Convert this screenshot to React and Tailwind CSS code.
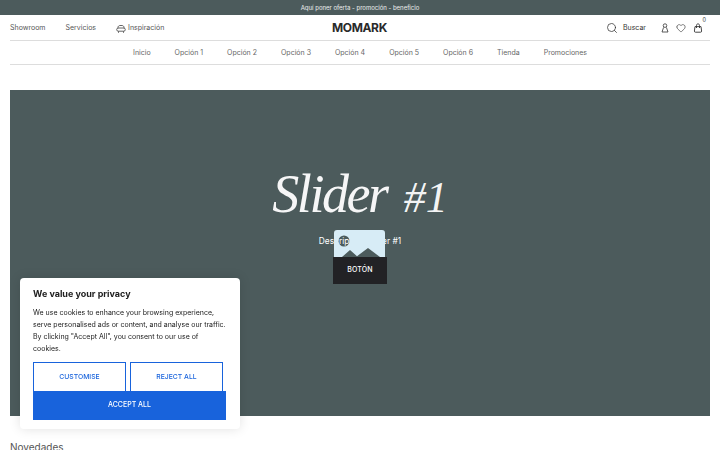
import React from 'react';
import { Search, Heart } from 'lucide-react';

const MENU = ['Inicio', 'Opción 1', 'Opción 2', 'Opción 3', 'Opción 4', 'Opción 5', 'Opción 6', 'Tienda', 'Promociones'];

const IconSofa = () => (
  <svg viewBox="0 0 10 10" className="w-[10px] h-[10px]" fill="none" stroke="currentColor" strokeWidth="0.9">
    <path d="M2 4.5V3.5C2 2.2 3 1.5 4 1.5H6C7 1.5 8 2.2 8 3.5V4.5" />
    <rect x="0.7" y="4" width="8.6" height="3.2" rx="1.6" />
    <path d="M2.5 7.2V8.8M7.5 7.2V8.8" />
  </svg>
);

const IconUser = () => (
  <svg viewBox="0 0 10 10" className="w-[10px] h-[10px]" fill="none" stroke="currentColor" strokeWidth="0.8">
    <circle cx="5" cy="2.6" r="1.8" />
    <path d="M3.6 4.4L2 9H8L6.4 4.4" />
  </svg>
);

const IconBag = () => (
  <svg viewBox="0 0 10 10" className="w-[10px] h-[10px]" fill="none" stroke="currentColor" strokeWidth="0.9">
    <path d="M2 3.6H8L8.6 8C8.7 8.7 8.3 9.2 7.6 9.2H2.4C1.7 9.2 1.3 8.7 1.4 8Z" />
    <path d="M3.5 5V2.4C3.5 1.4 4.2 0.9 5 0.9C5.8 0.9 6.5 1.4 6.5 2.4V5" />
  </svg>
);

function CookieBanner() {
  return (
    <div className="fixed left-[20px] top-[278px] w-[220px] h-[151px] bg-white rounded-[4px] shadow-[0_0_12px_rgba(0,0,0,0.12)] pl-[13px] pt-[9px]">
      <p className="text-[9px] leading-[14px] font-bold text-[#212121]">We value your privacy</p>
      <p className="text-[7px] leading-[12px] text-[#212121] mt-[6px] whitespace-nowrap">
        We use cookies to enhance your browsing experience,<br />
        serve personalised ads or content, and analyse our traffic.<br />
        By clicking "Accept All", you consent to our use of<br />
        cookies.
      </p>
      <div className="flex gap-[4px] mt-[7px]">
        <button className="w-[93px] h-[29px] border-[1.5px] border-b-0 border-[#1863dc] text-[#1863dc] text-[6.8px] font-medium">CUSTOMISE</button>
        <button className="w-[93px] h-[29px] border-[1.5px] border-b-0 border-[#1863dc] text-[#1863dc] text-[6.8px] font-medium">REJECT ALL</button>
      </div>
      <button className="block w-[193px] h-[29px] bg-[#1863dc] text-white text-[7px] font-medium">ACCEPT ALL</button>
    </div>
  );
}

export default function App() {
  return (
    <div className="h-[450px] overflow-hidden bg-white font-['Inter',sans-serif] text-[#555] antialiased opacity-[0.999]">
      <div className="h-[15px] bg-[#4c5b5c] text-white/90 text-[6px] flex items-center justify-center">Aquí poner oferta - promoción - beneficio</div>

      <div className="mx-[10px]">
        <header className="h-[26px] border-b border-[#ddd] flex items-center justify-between relative text-[7px]">
          <div className="flex items-center gap-[20px] pt-[2px]">
            <span>Showroom</span>
            <span>Servicios</span>
            <span className="flex items-center gap-[2px]"><IconSofa />Inspiración</span>
          </div>
          <div className="absolute left-[322px] top-[5px] text-[12px] leading-[15px] font-bold tracking-[-0.03em] text-[#2a2a2a]">MOMARK</div>
          <div className="flex items-center text-[#333]">
            <Search size={12} strokeWidth={1.5} />
            <span className="ml-[5px] mr-[14px] pt-[2px]">Buscar</span>
            <IconUser />
            <Heart size={10} strokeWidth={1.5} className="ml-[6px]" />
            <span className="relative ml-[7px] mr-[7px]">
              <IconBag />
              <span className="absolute -right-[3px] -top-[7px] text-[5.5px]">0</span>
            </span>
          </div>
        </header>

        <nav className="h-[24px] pt-[2px] border-b border-[#ddd] flex items-center justify-center gap-[24px] text-[7px] text-[#666]">
          {MENU.map((m) => <span key={m}>{m}</span>)}
        </nav>

        <section className="mt-[25px] h-[326px] bg-[#4c5b5c] flex flex-col items-center pt-[70px] text-white relative">
          <h1 className="h-[68px] font-['Liberation_Serif',serif] italic font-normal text-[54px] leading-[68px] tracking-[-0.045em] text-white/95">
            Slider <span className="text-[44px] ml-[6px] tracking-normal">#1</span>
          </h1>
          <p className="mt-[6px] text-[8.4px] leading-[14px]">Descripción slider #1</p>
          <svg viewBox="0 0 51 27" className="absolute left-[324px] top-[140px] w-[51px] h-[27px]">
            <path fillRule="evenodd" fill="#d7ecf6" d="M3 0H48A3 3 0 0 1 51 3V27H0V3A3 3 0 0 1 3 0ZM4.5 11a5.5 5.5 0 1 0 11 0a5.5 5.5 0 1 0 -11 0ZM8 27L16 20L23 26.2L34 18L46 27Z" />
          </svg>
          <button className="absolute left-[323px] top-[167px] w-[54px] h-[27px] bg-[#222225] text-white text-[7px] font-medium tracking-[0.02em]">BOTÓN</button>
        </section>

        <h2 className="mt-[23px] text-[10px] leading-[16px] text-[#555]">Novedades</h2>
      </div>

      <CookieBanner />
    </div>
  );
}
